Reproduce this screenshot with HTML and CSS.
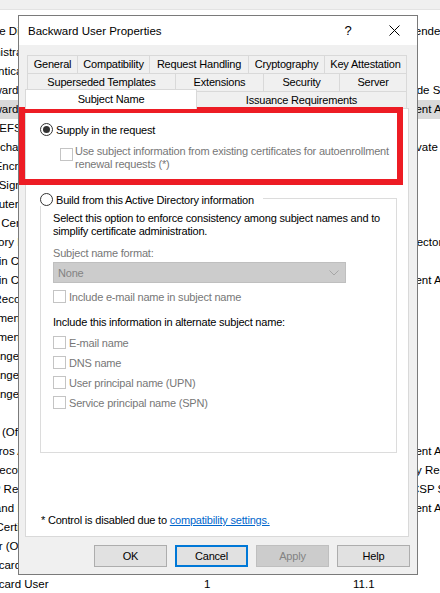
FILE: index.html
```html
<!DOCTYPE html>
<html>
<head>
<meta charset="utf-8">
<title>Backward User Properties</title>
<link rel="stylesheet" href="styles.css">
</head>
<body>
<div class="list">
  <div class="topband"></div>
  <div class="row head"><span class="c-name">Template Display Name</span><span>Schema Version</span><span>Version</span><span>Intended Purposes</span></div>
  <div class="row"><span class="c-name">Administrator</span><span>1</span><span>4.1</span><span></span></div>
  <div class="row"><span class="c-name">Authenticated Session</span><span>1</span><span>3.1</span><span></span></div>
  <div class="row"><span class="c-name">Backward Code Signing</span><span>2</span><span>100.2</span><span>Code Signing</span></div>
  <div class="row sel"><span class="c-name">Backward User</span><span>2</span><span>100.3</span><span>Client Authentication, Secure Email</span></div>
  <div class="row"><span class="c-name">Basic EFS</span><span>1</span><span>3.1</span><span></span></div>
  <div class="row"><span class="c-name">CA Exchange</span><span>2</span><span>106.0</span><span>Private Key Archival</span></div>
  <div class="row"><span class="c-name">CEP Encryption</span><span>1</span><span>4.1</span><span></span></div>
  <div class="row"><span class="c-name">Code Signing</span><span>1</span><span>3.1</span><span></span></div>
  <div class="row"><span class="c-name">Computer</span><span>1</span><span>5.1</span><span></span></div>
  <div class="row"><span class="c-name">Cross Certification Authority</span><span>2</span><span>105.0</span><span></span></div>
  <div class="row"><span class="c-name">Directory Email Replication</span><span>2</span><span>115.0</span><span>Directory Service Email Replication</span></div>
  <div class="row"><span class="c-name">Domain Controller</span><span>1</span><span>4.1</span><span></span></div>
  <div class="row"><span class="c-name">Domain Controller Authentication</span><span>2</span><span>110.0</span><span>Client Authentication, Server Authentication</span></div>
  <div class="row"><span class="c-name">EFS Recovery Agent</span><span>1</span><span>6.1</span><span></span></div>
  <div class="row"><span class="c-name">Enrollment Agent</span><span>1</span><span>4.1</span><span></span></div>
  <div class="row"><span class="c-name">Enrollment Agent (Computer)</span><span>1</span><span>5.1</span><span></span></div>
  <div class="row"><span class="c-name">Exchange Enrollment Agent (Offline request)</span><span>1</span><span>4.1</span><span></span></div>
  <div class="row"><span class="c-name">Exchange Signature Only</span><span>1</span><span>6.1</span><span></span></div>
  <div class="row"><span class="c-name">Exchange User</span><span>1</span><span>7.1</span><span></span></div>
  <div class="row"><span class="c-name">IPSec</span><span>1</span><span>8.1</span><span></span></div>
  <div class="row"><span class="c-name">IPSec (Offline request)</span><span>1</span><span>7.1</span><span></span></div>
  <div class="row"><span class="c-name">Kerberos Authentication</span><span>2</span><span>110.0</span><span>Client Authentication, Server Authentication</span></div>
  <div class="row"><span class="c-name">Key Recovery Agent</span><span>2</span><span>105.0</span><span>Key Recovery Agent</span></div>
  <div class="row"><span class="c-name">OCSP Response Signing</span><span>3</span><span>101.0</span><span>OCSP Signing</span></div>
  <div class="row"><span class="c-name">RAS and IAS Server</span><span>2</span><span>101.0</span><span>Client Authentication, Server Authentication</span></div>
  <div class="row"><span class="c-name">Root Certification Authority</span><span>1</span><span>5.1</span><span></span></div>
  <div class="row"><span class="c-name">Router (Offline request)</span><span>1</span><span>4.1</span><span></span></div>
  <div class="row"><span class="c-name">Smartcard Logon</span><span>1</span><span>6.1</span><span></span></div>
  <div class="row"><span class="c-name">Smartcard User</span><span>1</span><span>11.1</span><span></span></div>
</div>

<div class="dialog">
  <div class="titlebar">
    <span class="title">Backward User Properties</span>
    <span class="tb-btn help">?</span>
    <span class="tb-btn close"><svg width="11" height="11" viewBox="0 0 11 11"><path d="M0.5 0.5 L10.5 10.5 M10.5 0.5 L0.5 10.5" stroke="#000" stroke-width="1" fill="none"/></svg></span>
  </div>
  <div class="body">
    <div class="tabs">
      <div class="tabrow">
        <span class="tab w-general">General</span>
        <span class="tab w-compat">Compatibility</span>
        <span class="tab w-request">Request Handling</span>
        <span class="tab w-crypto">Cryptography</span>
        <span class="tab w-key">Key Attestation</span>
      </div>
      <div class="tabrow">
        <span class="tab w-super">Superseded Templates</span>
        <span class="tab w-ext">Extensions</span>
        <span class="tab w-sec">Security</span>
        <span class="tab w-server">Server</span>
      </div>
      <div class="tabrow r3">
        <span class="tab selected w-subject">Subject Name</span>
        <span class="tab w-issue">Issuance Requirements</span>
      </div>
    </div>
    <div class="panel">
      <div class="radio-row r1"><span class="radio on"></span><span>Supply in the request</span></div>
      <div class="cb-row">
        <span class="cb"></span>
        <span class="cb-text disabled">Use subject information from existing certificates for autoenrollment<br>renewal requests (*)</span>
      </div>
      <div class="radio-row r2"><span class="radio"></span><span>Build from this Active Directory information</span></div>
      <div class="group">
        <p>Select this option to enforce consistency among subject names and to<br>simplify certificate administration.</p>
        <p class="g-label disabled">Subject name format:</p>
        <div class="select"><span>None</span><svg width="10" height="6" viewBox="0 0 10 6"><path d="M0.5 0.5 L5 5 L9.5 0.5" stroke="#a6a6a6" fill="none"/></svg></div>
        <div class="gcb-row"><span class="cb"></span><span class="disabled">Include e-mail name in subject name</span></div>
        <p class="g-label2">Include this information in alternate subject name:</p>
        <div class="gcb-row alt"><span class="cb"></span><span class="disabled">E-mail name</span></div>
        <div class="gcb-row alt"><span class="cb"></span><span class="disabled">DNS name</span></div>
        <div class="gcb-row alt"><span class="cb"></span><span class="disabled">User principal name (UPN)</span></div>
        <div class="gcb-row alt"><span class="cb"></span><span class="disabled">Service principal name (SPN)</span></div>
      </div>
      <p class="note">* Control is disabled due to <a class="link" href="#">compatibility settings.</a></p>
    </div>
    <div class="buttons">
      <button class="btn">OK</button>
      <button class="btn default">Cancel</button>
      <button class="btn off">Apply</button>
      <button class="btn">Help</button>
    </div>
  </div>
</div>

<div class="highlight"></div>
</body>
</html>
```

FILE: styles.css
```css
* { box-sizing: border-box; }

body {
  margin: 0;
  width: 440px;
  height: 593px;
  overflow: hidden;
  position: relative;
  background: #fff;
  font-family: "Liberation Sans", Arial, sans-serif;
  font-size: 11px;
  color: #000;
}

/* background list view */
.list { width: 440px; font-size: 11.5px; }
.topband {
  height: 10px;
  background: #f0f0f0;
  border-bottom: 1px solid #e3e3e3;
  margin-bottom: 10px;
}
.row {
  display: grid;
  grid-template-columns: 256px 149px 49px 300px;
  margin-left: -52px;
  height: 19px;
  line-height: 19px;
  white-space: nowrap;
}
.row > span { overflow: hidden; }
.row.head { height: 23px; line-height: 23px; }
.c-name { padding-left: 20px; }
.head .c-name { padding-left: 11px; }
.row.sel { background: #d9d9d9; }

/* dialog window */
.dialog {
  position: absolute;
  left: 18px;
  top: 15px;
  width: 400px;
  height: 560px;
  border: 1px solid #7a7a7a;
  background: #f0f0f0;
  display: flex;
  flex-direction: column;
  letter-spacing: -0.2px;
}
.titlebar {
  height: 29px;
  background: #fff;
  display: flex;
  align-items: center;
  padding-left: 9px;
  flex: none;
}
.title { flex: 1; font-size: 11.5px; letter-spacing: 0; }
.tb-btn {
  width: 46px;
  height: 29px;
  display: flex;
  align-items: center;
  justify-content: center;
}
.help { font-size: 13px; letter-spacing: 0; }

.body {
  flex: 1;
  padding: 10px 7px 7px 6px;
  display: flex;
  flex-direction: column;
}

/* tabs */
.tabs { margin-left: 2px; width: 380px; flex: none; }
.tabrow { display: flex; align-items: flex-start; }
.tab {
  height: 18px;
  border: 1px solid #d9d9d9;
  border-bottom: none;
  margin-right: -1px;
  text-align: center;
  line-height: 16px;
  background: #f0f0f0;
  white-space: nowrap;
  flex: none;
}
.tabrow.r3 { margin-left: -2px; height: 17px; }
.r3 .tab { height: 17px; }
.r3 .tab.selected {
  position: relative;
  z-index: 2;
  height: 20px;
  margin-top: -2px;
  background: #fff;
  line-height: 18px;
}
.w-general { width: 51px; }
.w-compat { width: 73px; }
.w-request { width: 100px; }
.w-crypto { width: 77px; }
.w-key { width: 83px; }
.w-super { width: 149px; }
.w-ext { width: 89px; }
.w-sec { width: 77px; }
.w-server { width: 68px; }
.w-subject { width: 172px; }
.w-issue { width: 211px; }

/* tab page */
.panel {
  height: 429px;
  margin-right: 1px;
  background: #fff;
  border: 1px solid #d9d9d9;
  display: flex;
  flex-direction: column;
  padding: 0 0 9px 14px;
  flex: none;
}
.disabled { color: #777; }

.radio-row {
  display: flex;
  align-items: center;
  gap: 3px;
  height: 13px;
  align-self: flex-start;
}
.radio {
  width: 13px;
  height: 13px;
  border: 1px solid #333;
  border-radius: 50%;
  background: #fff;
  display: flex;
  align-items: center;
  justify-content: center;
  flex: none;
}
.radio.on::after {
  content: "";
  width: 7px;
  height: 7px;
  border-radius: 50%;
  background: #333;
}
.r1 { margin-top: 14px; }
.cb-row {
  display: flex;
  gap: 2px;
  margin-top: 9px;
  margin-left: 20px;
}
.cb {
  width: 13px;
  height: 13px;
  border: 1px solid #c4c4c4;
  background: #fff;
  flex: none;
}
.cb-row .cb { margin-top: 3px; }
.cb-text { line-height: 13px; }

.r2 {
  margin-top: 22px;
  position: relative;
  z-index: 1;
  background: #fff;
  padding-right: 9px;
}
.group {
  margin-top: -8px;
  width: 357px;
  height: 255px;
  border: 1px solid #dcdcdc;
  padding: 13px 0 0 12px;
  flex: none;
}
.group p { margin: 0; line-height: 13px; }
.group .g-label { margin-top: 9px; }
.select {
  margin-top: 2px;
  width: 293px;
  height: 21px;
  background: #cccccc;
  border: 1px solid #bfbfbf;
  display: flex;
  align-items: center;
  justify-content: space-between;
  padding: 0 6px 0 4px;
  color: #838383;
}
.gcb-row {
  display: flex;
  align-items: center;
  gap: 3px;
  height: 13px;
  margin-top: 7px;
}
.group .g-label2 { margin-top: 13px; }

.note {
  margin: auto 0 0 0;
  line-height: 13px;
  padding-left: 1px;
}
.link { color: #0066cc; text-decoration: underline; }

/* buttons */
.buttons {
  display: flex;
  justify-content: flex-end;
  gap: 8px;
  margin-top: 8px;
}
.btn {
  width: 73px;
  height: 22px;
  padding: 0;
  background: #e1e1e1;
  border: 1px solid #adadad;
  font: inherit;
  letter-spacing: -0.2px;
  color: #000;
}
.btn.default { border: 2px solid #0078d7; }
.btn.off { background: #cccccc; border-color: #bfbfbf; color: #838383; }

/* annotation */
.highlight {
  position: absolute;
  left: 19px;
  top: 107px;
  width: 384px;
  height: 78px;
  border: 6px solid #ed1c24;
}
```
